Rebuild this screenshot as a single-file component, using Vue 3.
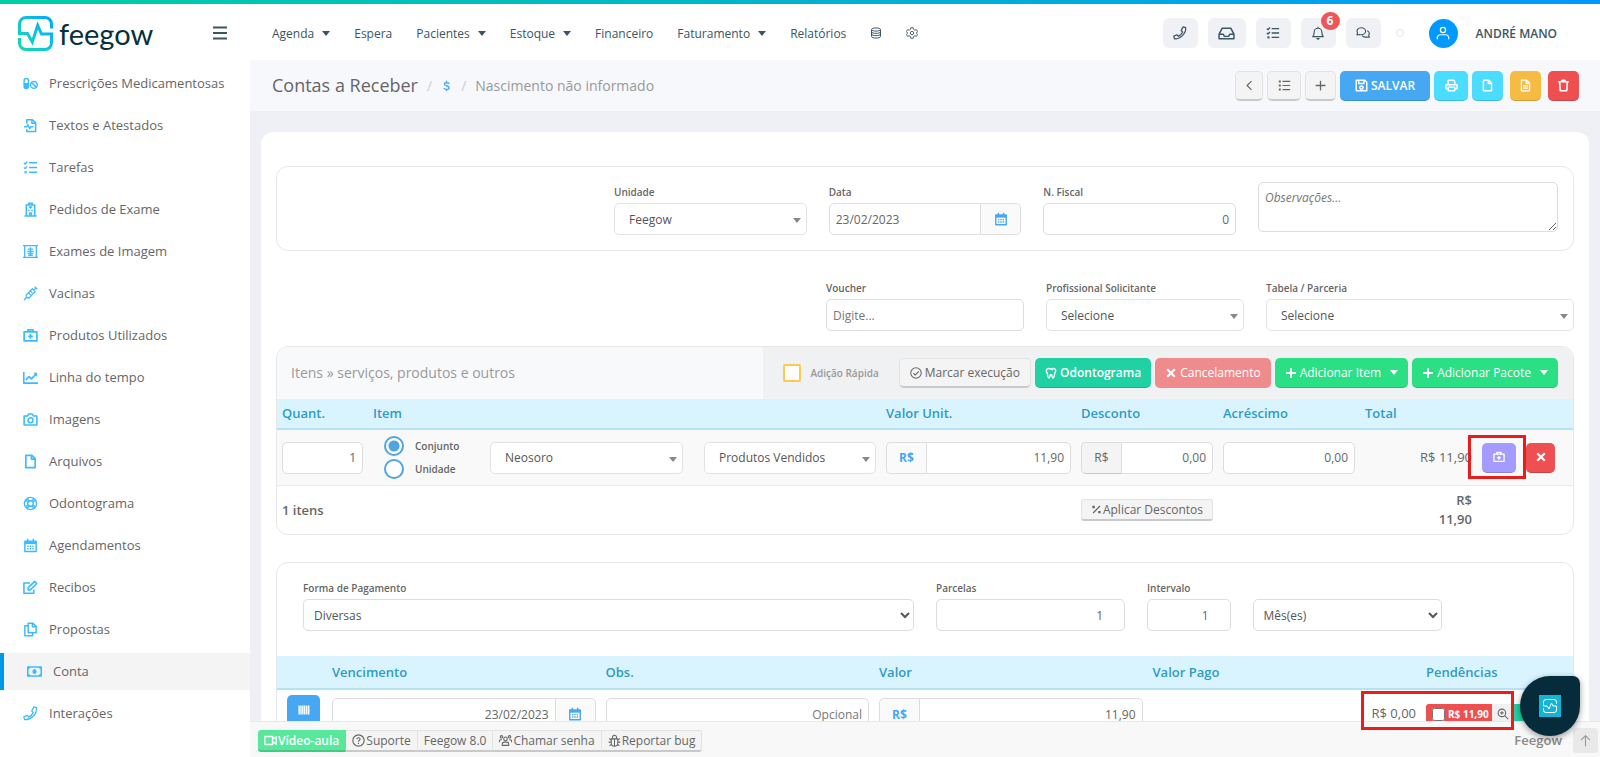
<template>
  <div class="app">
    <header class="topnav">
      <div class="brand">
        <a href="#" class="logo" aria-label="feegow">
          <svg class="logo-mark" viewBox="0 0 35 35" fill="none" stroke="url(#brandGradient)" stroke-width="3">
            <defs>
              <linearGradient id="brandGradient" x1="0" y1="1" x2="1" y2="0">
                <stop offset="0" stop-color="#0fdca8" />
                <stop offset="0.45" stop-color="#0fc6dc" />
                <stop offset="1" stop-color="#00a8ff" />
              </linearGradient>
            </defs>
            <path d="M33.5 12.5V8A6.5 6.5 0 0 0 27 1.5H8A6.5 6.5 0 0 0 1.5 8v9.5h8l4.8 8.5 5.4-16.5 3.8 8.5h10v9a6.5 6.5 0 0 1-6.5 6.5H8A6.5 6.5 0 0 1 1.5 27v-5" />
          </svg>
          <span>feegow</span>
        </a>
        <button type="button" class="menu-toggle" aria-label="Menu"><Icon name="bars" /></button>
      </div>
      <nav class="nav">
        <a v-for="item in navItems" :key="item.label" href="#">{{ item.label }}<i v-if="item.menu" class="caret"></i></a>
        <a href="#" aria-label="Dados"><Icon name="database" /></a>
        <a href="#" aria-label="Ajustes"><Icon name="gear" /></a>
      </nav>
      <div class="tools">
        <button v-for="tool in tools" :key="tool.icon" type="button" class="tool" :class="tool.icon" :aria-label="tool.label">
          <Icon :name="tool.icon" />
          <span v-if="tool.badge" class="badge">{{ tool.badge }}</span>
        </button>
        <span class="status-dot"></span>
        <span class="avatar"><Icon name="user" /></span>
        <span class="user-name">ANDRÉ MANO</span>
      </div>
    </header>

    <div class="body">
      <aside class="sidebar">
        <a v-for="link in links" :key="link.label" href="#" class="side-link" :class="{ active: link.active }">
          <Icon :name="link.icon" />{{ link.label }}
        </a>
      </aside>

      <div class="workspace">
        <div class="topbar">
          <h1>Contas a Receber</h1>
          <span class="sep">/</span>
          <Icon name="dollar" class="crumb-icon" />
          <span class="sep">/</span>
          <span class="crumb">Nascimento não informado</span>
          <div class="actions">
            <button type="button" class="btn w28" aria-label="Voltar"><Icon name="left" /></button>
            <button type="button" class="btn w34" aria-label="Lista"><Icon name="list" /></button>
            <button type="button" class="btn w31" aria-label="Novo"><Icon name="plus" /></button>
            <button type="button" class="btn primary save"><Icon name="save" />SALVAR</button>
            <button type="button" class="btn info w34" aria-label="Imprimir"><Icon name="print" /></button>
            <button type="button" class="btn info w31" aria-label="Arquivo"><Icon name="file" /></button>
            <button type="button" class="btn warning w31 apart" aria-label="Recibo"><Icon name="filetext" /></button>
            <button type="button" class="btn danger w31 apart" aria-label="Excluir"><Icon name="trash" /></button>
          </div>
        </div>

        <main class="content">
          <form class="card" @submit.prevent>
            <section class="panel head-panel fields">
              <div class="field c2 from4">
                <label for="unidade">Unidade</label>
                <div class="select"><select id="unidade"><option>Feegow</option></select></div>
              </div>
              <div class="field c2">
                <label for="data">Data</label>
                <div class="group">
                  <input id="data" type="text" v-model="date">
                  <button type="button" class="addon" aria-label="Calendário"><Icon name="calendar" /></button>
                </div>
              </div>
              <div class="field c2">
                <label for="fiscal">N. Fiscal</label>
                <input id="fiscal" class="num" type="text" value="0">
              </div>
              <textarea class="c3" placeholder="Observações..." aria-label="Observações"></textarea>
            </section>

            <div class="fields extra-fields">
              <div class="field c2 from6">
                <label for="voucher">Voucher</label>
                <input id="voucher" type="text" placeholder="Digite...">
              </div>
              <div class="field c2">
                <label for="profissional">Profissional Solicitante</label>
                <div class="select"><select id="profissional"><option>Selecione</option></select></div>
              </div>
              <div class="field c3">
                <label for="tabela">Tabela / Parceria</label>
                <div class="select"><select id="tabela"><option>Selecione</option></select></div>
              </div>
            </div>

            <section class="panel items">
              <div class="items-head">
                <h2>Itens » serviços, produtos e outros</h2>
                <div class="items-actions">
                  <label class="quick"><input type="checkbox">Adição Rápida</label>
                  <button type="button" class="btn"><Icon name="check" />Marcar execução</button>
                  <button type="button" class="btn teal"><Icon name="tooth" />Odontograma</button>
                  <button type="button" class="btn danger" disabled><Icon name="times" />Cancelamento</button>
                  <button type="button" class="btn success"><Icon name="plusbold" />Adicionar Item<i class="caret"></i></button>
                  <button type="button" class="btn success"><Icon name="plusbold" />Adicionar Pacote<i class="caret"></i></button>
                </div>
              </div>
              <table class="items-table">
                <colgroup>
                  <col class="col-qty"><col><col class="col-kind"><col class="col-unit"><col class="col-off">
                  <col class="col-off"><col class="col-total"><col class="col-use"><col class="col-del">
                </colgroup>
                <thead>
                  <tr>
                    <th>Quant.</th><th colspan="2">Item</th><th>Valor Unit.</th><th>Desconto</th><th>Acréscimo</th>
                    <th>Total</th><th></th><th></th>
                  </tr>
                </thead>
                <tbody>
                  <tr>
                    <td><input class="num" type="text" value="1" aria-label="Quantidade"></td>
                    <td>
                      <div class="item-cell">
                        <div class="radios">
                          <label><input v-model="kind" type="radio" value="C">Conjunto</label>
                          <label><input v-model="kind" type="radio" value="U">Unidade</label>
                        </div>
                        <div class="select"><select aria-label="Item"><option>Neosoro</option></select></div>
                      </div>
                    </td>
                    <td><div class="select"><select aria-label="Categoria"><option>Produtos Vendidos</option></select></div></td>
                    <td>
                      <div class="group">
                        <span class="addon money">R$</span>
                        <input class="num" type="text" value="11,90" aria-label="Valor unitário">
                      </div>
                    </td>
                    <td>
                      <div class="group">
                        <button type="button" class="addon plain">R$</button>
                        <input class="num" type="text" value="0,00" aria-label="Desconto">
                      </div>
                    </td>
                    <td><input class="num" type="text" value="0,00" aria-label="Acréscimo"></td>
                    <td class="right">R$ 11,90</td>
                    <td>
                      <div class="marked">
                        <button type="button" class="btn purple w34" aria-label="Estoque"><Icon name="kit" /></button>
                        <span class="mark mark-stock"></span>
                      </div>
                    </td>
                    <td><button type="button" class="btn danger w29" aria-label="Remover"><Icon name="times" /></button></td>
                  </tr>
                </tbody>
                <tfoot>
                  <tr>
                    <td colspan="4">1 itens</td>
                    <td colspan="2"><button type="button" class="btn small discount"><Icon name="percent" />Aplicar Descontos</button></td>
                    <td class="right total">R$<br>11,90</td>
                    <td colspan="2"></td>
                  </tr>
                </tfoot>
              </table>
            </section>

            <section class="panel payment">
              <div class="fields pay-fields">
                <div class="field c6">
                  <label for="forma">Forma de Pagamento</label>
                  <select id="forma"><option>Diversas</option></select>
                </div>
                <div class="field c2">
                  <label for="parcelas">Parcelas</label>
                  <input id="parcelas" class="num spin" type="text" value="1">
                </div>
                <div class="field c1">
                  <label for="intervalo">Intervalo</label>
                  <input id="intervalo" class="num spin" type="text" value="1">
                </div>
                <div class="field c2 bottom">
                  <select aria-label="Período"><option>Mês(es)</option></select>
                </div>
              </div>
              <table class="pay-table">
                <colgroup><col class="col-code"><col><col><col><col><col class="col-due"></colgroup>
                <thead>
                  <tr><th></th><th>Vencimento</th><th>Obs.</th><th>Valor</th><th>Valor Pago</th><th>Pendências</th></tr>
                </thead>
                <tbody>
                  <tr>
                    <td class="code"><button type="button" class="btn primary" aria-label="Boleto"><Icon name="barcode" /></button></td>
                    <td>
                      <div class="group">
                        <input class="num" type="text" v-model="date" aria-label="Vencimento">
                        <button type="button" class="addon" aria-label="Calendário"><Icon name="calendar" /></button>
                      </div>
                    </td>
                    <td><input class="num" type="text" placeholder="Opcional" aria-label="Observação"></td>
                    <td>
                      <div class="group">
                        <span class="addon money">R$</span>
                        <input class="num" type="text" value="11,90" aria-label="Valor">
                      </div>
                    </td>
                    <td class="right paid">R$ 0,00</td>
                    <td>
                      <div class="marked due">
                        <label class="pending"><input type="checkbox">R$ 11,90</label>
                        <button type="button" class="look" aria-label="Detalhes"><Icon name="zoom" /></button>
                        <button type="button" class="pay" aria-label="Pagar"></button>
                        <span class="mark mark-due"></span>
                      </div>
                    </td>
                  </tr>
                </tbody>
              </table>
            </section>
          </form>
        </main>

        <footer class="footer">
          <div class="help">
            <button type="button" class="btn small video"><Icon name="video" />Vídeo-aula</button>
            <button type="button" class="btn small"><Icon name="question" />Suporte</button>
            <button type="button" class="btn small">Feegow 8.0</button>
            <button type="button" class="btn small"><Icon name="users" />Chamar senha</button>
            <button type="button" class="btn small"><Icon name="bug" />Reportar bug</button>
          </div>
          <span class="footer-brand">Feegow</span>
          <button type="button" class="to-top" aria-label="Topo"><Icon name="up" /></button>
        </footer>
      </div>
    </div>

    <button type="button" class="chat" aria-label="Chat">
      <svg viewBox="0 0 22 22" fill="none" stroke="#fff" stroke-width="1">
        <path d="M17.500 9V7A2.500 2.500 0 0 0 15 4.500H7A2.500 2.500 0 0 0 4.500 7v4H8l2 3 2.500-6 1.500 3h3.500v4a2.500 2.500 0 0 1-2.500 2.500H7A2.500 2.500 0 0 1 4.500 15v-2" />
      </svg>
    </button>
  </div>
</template>

<script setup>
import { ref, h } from 'vue'

const date = ref('23/02/2023')
const kind = ref('C')

// s = stroked outline, f = filled shape, w = stroke width (16x16 grid)
const icons = {
  bars: { s: 'M1 2.500h14M1 8h14M1 13.500h14', w: 2 },
  database: { s: 'M2 3.500c0-3 12-3 12 0v9c0 3-12 3-12 0zM2 3.500c0 2.600 12 2.600 12 0M2 6.500c0 2.600 12 2.600 12 0M2 9.500c0 2.600 12 2.600 12 0', w: 1.3 },
  gear: { s: 'M6.500 1h3l.5 2.200 1.700 1 2.200-.7 1.500 2.600L13.800 8l1.600 1.900-1.500 2.600-2.200-.7-1.700 1-.5 2.200h-3L6 12.800l-1.700-1-2.200.7L.6 9.900 2.200 8 .6 6.100l1.500-2.600 2.200.7 1.700-1zM10.200 8a2.200 2.200 0 1 1-4.400 0 2.200 2.200 0 0 1 4.400 0z', w: 1.2 },
  phone: { s: 'M11.500 1l3 .8c.5 7-6 13.200-12.800 12.800l-.8-3 3.600-1.600 1.500 1.800c2.200-1 4-2.800 5-5L9.300 5.300z', w: 1.4 },
  inbox: { s: 'M1 8.500L4 3h8l3 5.500V13H1zM1 8.700h4l1 2h4l1-2h4', w: 1.4 },
  tasks: { s: 'M1 3l1.200 1.200L4.500 1.800M1 8l1.200 1.200 2.300-2.400M6.500 3H15M6.500 8H15M6.500 13H15', f: 'M1.600 11.800H4v2.400H1.600z', w: 1.5 },
  bell: { s: 'M2 12.200c1.600-1.600 1.600-3 1.600-5.200a4.400 4.400 0 0 1 8.800 0c0 2.200 0 3.600 1.600 5.200zM8 2.500V.8', f: 'M6 13.800h4a2 2 0 0 1-4 0z', w: 1.3 },
  chats: { s: 'M1 10c1-1 .8-1.500.6-2.500C.3 4.500 2.600 2 5.800 2s5.200 2 5.200 4-2 4-5.200 4c-.8 0-1.500 0-2-.3-1 .5-1.800.5-2.800.3zM12.600 5.500c3 .8 3 3.500 1.900 5 0 1 .2 1.500.8 2.300-1 .2-2 .1-2.800-.3-2.500.6-4.500-.2-5.300-1.500', w: 1.3 },
  user: { s: 'M11 4.500a3 3 0 1 1-6 0 3 3 0 0 1 6 0zM1.500 15v-1.500a3.500 3.500 0 0 1 3.500-3.500h6a3.500 3.500 0 0 1 3.500 3.500V15', w: 1.4 },
  pills: { s: 'M1.200 5a2.300 2.300 0 0 1 4.600 0v6a2.300 2.300 0 0 1-4.600 0zM15.200 9.500a3.600 3.600 0 1 1-7.200 0 3.600 3.600 0 0 1 7.200 0zM9.300 7.200l4.800 4.700', f: 'M1 7.500h5V11a2.500 2.500 0 0 1-5 0z', w: 1.6 },
  filewave: { s: 'M4 6V1.800h6L13.500 5v9.500H4V12M9.500 2v3.500h4M1 9.200h3l1.200-2 2 4 1.300-2H11', w: 1.6 },
  hospital: { s: 'M3.500 15V3.200h9V15M1.500 15h13M6 3V1.200h4V3M8 4.200v3M6.500 5.700h3M7 15v-3.200h2V15M5.500 9h1.700M8.800 9h1.700', w: 1.6 },
  xray: { s: 'M0 1.700h16M0 14.300h16M1.800 2v12M14.200 2v12M8 3.500v9M5 5.500h6M4.500 7.800h7M5 10h6M5.500 12h5', w: 1.4 },
  syringe: { s: 'M1 15l3-3M3.500 12.500V9.500L10 3l3 3-6.500 6.500zM9.500 2.500l4 4M11.500 4.500L14 2M12.500.8l2.700 2.700M6 7.500L8 9.500M8 5.500l2 2', w: 1.4 },
  kit: { s: 'M1.200 4.200h13.600v9.600H1.200zM5.200 4V1.900h5.600V4M8 6.500v5M5.500 9h5', w: 1.8 },
  chart: { s: 'M.8 2v12H16M3 10.500l3.500-3.500 2.500 2.500 5-5', f: 'M10.800 3H15v4.200z', w: 1.8 },
  camera: { s: 'M1.200 4.200H5l1-2h4l1 2h3.800v9.600H1.200zM10.600 8.800a2.600 2.600 0 1 1-5.200 0 2.600 2.600 0 0 1 5.200 0z', w: 1.7 },
  file: { s: 'M3 1.500h6.500L13 5v9.500H3zM9 1.800V5.500h4', w: 1.8 },
  filetext: { s: 'M3 1.500h6.500L13 5v9.500H3zM9 1.800V5.500h4M5 8.500h6M5 11.200h6', w: 1.6 },
  ring: { s: 'M14.500 8a6.500 6.500 0 1 1-13 0 6.500 6.500 0 0 1 13 0zM11 8a3 3 0 1 1-6 0 3 3 0 0 1 6 0zM3.200 4.600l2.200 2.200M4.600 3.200l2.200 2.200M12.800 4.600l-2.200 2.200M11.400 3.200L9.200 5.400M3.200 11.400l2.200-2.200M4.600 12.800l2.200-2.200M12.800 11.400l-2.200-2.200M11.400 12.800l-2.200-2.200', w: 1.5 },
  calendar: { s: 'M2 3.500h12v11H2zM5 .8v3M11 .8v3M4.500 8.700h1.600M7.200 8.700h1.600M9.900 8.700h1.600M4.500 11.500h1.600M7.200 11.500h1.600M9.900 11.500h1.600', f: 'M2 3.500h12V6.500H2z', w: 1.6 },
  edit: { s: 'M11.500 10v4.200H1V3.200h6.500M5.500 10.500V8.200l7-6.700 2.200 2.200-7 6.800z', w: 1.7 },
  copy: { s: 'M5.500 1.200h5L14 4.500v7H5.500zM10 1.500V5h4M5.200 4H2v10.700h8.200v-3', w: 1.6 },
  money: { s: 'M.8 3.200h14.400v9.600H.8zM.8 5.500l2.200-2M13 3.500l2.200 2M.8 10.500l2.200 2M13 12.500l2.200-2', f: 'M10.200 8a2.200 2.700 0 1 1-4.400 0 2.200 2.700 0 0 1 4.400 0z', w: 1.7 },
  dollar: { s: 'M12 4.800C11 3 5 2.500 4.800 5.300 4.700 8.300 11.800 7 11.800 10.600c0 3-6.500 3-7.800.3M8 .2v2.600M8 13v2.800', w: 2 },
  left: { s: 'M10.500 2.500L5 8l5.500 5.500', w: 1.4 },
  list: { s: 'M5.500 3H15M5.500 8H15M5.500 13H15', f: 'M1 1.800h2.400v2.400H1zM1 6.800h2.400v2.400H1zM1 11.800h2.400v2.400H1z', w: 1.5 },
  plus: { s: 'M8 2v12M2 8h12', w: 1.6 },
  plusbold: { s: 'M8 1.500v13M1.500 8h13', w: 2.6 },
  save: { s: 'M1.500 1.500h10.500l2.500 2.500v10.500h-13zM4.500 1.500v4h6.500v-4M10 10.500a2 2 0 1 1-4 0 2 2 0 0 1 4 0z', w: 1.8 },
  print: { s: 'M4 6.500v-5h6.500L12 3v3.500M4 12H1.200V7h13.600v5H12M4 10.200h8v4.300H4z', w: 1.8 },
  trash: { s: 'M1.500 3.500h13M5.500 3.200l.8-1.700h3.400l.8 1.700M3.200 3.500l.8 11h8l.8-11', w: 1.9 },
  check: { s: 'M15 8A7 7 0 1 1 1 8a7 7 0 0 1 14 0zM4.500 8.200L7 10.700l4.700-4.900', w: 1.4 },
  tooth: { s: 'M8 3c2-1.500 5.500-1.800 6.200 1.300.5 2.700-1.400 3.300-1.600 5.700-.2 2-.6 4.600-1.900 4.600C9.300 14.600 9.600 10 8 10s-1.300 4.600-2.700 4.600c-1.300 0-1.700-2.600-1.900-4.600C3.200 7.600 1.300 7 1.800 4.300 2.500 1.200 6 1.500 8 3l2.200 1.300', w: 1.9 },
  times: { s: 'M3 3l10 10M13 3L3 13', w: 3 },
  percent: { s: 'M3 13L13 3', f: 'M2 2.500h3.500V6H2zM10.500 10H14v3.500h-3.500z', w: 1.8 },
  barcode: { s: 'M1.500 2v12M4 2v12M6.500 2v12M9 2v12M11.700 2v12M14.300 2v12', w: 1.9 },
  zoom: { s: 'M11.500 6.500a5 5 0 1 1-10 0 5 5 0 0 1 10 0zM10.200 10.200L15 15M6.500 4.200v4.600M4.200 6.500h4.600', w: 1.4 },
  video: { s: 'M1 3h9.500v10H1zM10.500 6.500L15 3.500v9l-4.500-3', w: 1.7 },
  question: { s: 'M15 8A7 7 0 1 1 1 8a7 7 0 0 1 14 0zM6 6.300c.2-2.400 4-2.200 4 0C10 7.800 8 7.700 8 9.500M8 10.800v1.400', w: 1.4 },
  users: { s: 'M10.200 6a2.200 2.200 0 1 1-4.400 0 2.200 2.200 0 0 1 4.400 0zM4 14v-1.500A2.500 2.500 0 0 1 6.500 10h3a2.500 2.500 0 0 1 2.500 2.500V14zM4.500 3.500a1.500 1.500 0 1 1-3 0 1.500 1.500 0 0 1 3 0zM14.500 3.500a1.500 1.500 0 1 1-3 0 1.500 1.500 0 0 1 3 0zM.5 10V8.500A1.500 1.500 0 0 1 2 7h1.500M15.500 10V8.500A1.500 1.500 0 0 0 14 7h-1.500', w: 1.3 },
  bug: { s: 'M4 6h8v5a4 4 0 0 1-8 0zM5.500 6V4a2.500 2.500 0 0 1 5 0v2M8 6v9M4 7.500L1.500 5.500M12 7.500l2.500-2M4 10H.8M12 10h3.200M4.500 12.500L2 14.500M11.500 12.500l2.500 2', w: 1.3 },
  up: { s: 'M8 15V2M2.500 7.500L8 2l5.500 5.500', w: 1.4 },
}

function Icon({ name }) {
  const { s, f, w } = icons[name]
  return h('svg', { class: 'icon', viewBox: '0 0 16 16', 'aria-hidden': 'true' }, [
    h('path', { d: s, fill: 'none', stroke: 'currentColor', 'stroke-width': w, 'stroke-linejoin': 'round' }),
    f ? h('path', { d: f, fill: 'currentColor' }) : null,
  ])
}
Icon.props = ['name']

const navItems = [
  { label: 'Agenda', menu: true },
  { label: 'Espera' },
  { label: 'Pacientes', menu: true },
  { label: 'Estoque', menu: true },
  { label: 'Financeiro' },
  { label: 'Faturamento', menu: true },
  { label: 'Relatórios' },
]

const tools = [
  { icon: 'phone', label: 'Ligações' },
  { icon: 'inbox', label: 'Entrada' },
  { icon: 'tasks', label: 'Tarefas' },
  { icon: 'bell', label: 'Notificações', badge: 6 },
  { icon: 'chats', label: 'Mensagens' },
]

const links = [
  { icon: 'pills', label: 'Prescrições Medicamentosas' },
  { icon: 'filewave', label: 'Textos e Atestados' },
  { icon: 'tasks', label: 'Tarefas' },
  { icon: 'hospital', label: 'Pedidos de Exame' },
  { icon: 'xray', label: 'Exames de Imagem' },
  { icon: 'syringe', label: 'Vacinas' },
  { icon: 'kit', label: 'Produtos Utilizados' },
  { icon: 'chart', label: 'Linha do tempo' },
  { icon: 'camera', label: 'Imagens' },
  { icon: 'file', label: 'Arquivos' },
  { icon: 'ring', label: 'Odontograma' },
  { icon: 'calendar', label: 'Agendamentos' },
  { icon: 'edit', label: 'Recibos' },
  { icon: 'copy', label: 'Propostas' },
  { icon: 'money', label: 'Conta', active: true },
  { icon: 'phone', label: 'Interações' },
]
</script>

<style>
body {
  margin: 0;
  overflow: hidden;
}
</style>

<style scoped>
.app {
  position: relative;
  display: flex;
  flex-direction: column;
  height: 100vh;
  overflow: hidden;
  background: #eff0f5;
  color: #666;
  font: 13px/19px "Open Sans", "Noto Sans", sans-serif;
}
.app *, .app *::before, .app *::after { box-sizing: border-box; }
a { color: inherit; text-decoration: none; }
button, input, select, textarea { font: inherit; color: inherit; margin: 0; }
button { cursor: pointer; padding: 0; border: 0; background: none; }
.icon { width: 14px; height: 14px; flex: none; display: block; }
.caret {
  display: inline-block;
  border: 4px solid transparent;
  border-top: 5px solid currentColor;
  border-bottom: 0;
}

/* header */
.topnav {
  flex: none;
  display: flex;
  align-items: center;
  height: 60px;
  padding-top: 6px;
  background: linear-gradient(90deg, #00cfa5, #00b4cc 50%, #0099ff) top / 100% 4px no-repeat #fff;
  color: #3a5563;
}
.brand {
  width: 250px;
  padding: 0 22px 0 18px;
  display: flex;
  align-items: center;
  justify-content: space-between;
}
.logo {
  display: flex;
  align-items: center;
  gap: 6px;
  font: 29px/35px Lato, sans-serif;
  color: #06303c;
}
.logo-mark { width: 35px; height: 35px; }
.menu-toggle .icon { width: 16px; height: 16px; }
.nav { display: flex; align-items: center; gap: 24px; padding-left: 22px; font-size: 12px; }
.nav a { display: flex; align-items: center; gap: 8px; }
.nav .icon { width: 12px; height: 12px; }
.tools { margin-left: auto; padding-right: 43px; display: flex; align-items: center; gap: 10px; }
.tool {
  position: relative;
  width: 35px;
  height: 30px;
  border-radius: 6px;
  background: #eff1f5;
  display: grid;
  place-items: center;
}
.tool.inbox { width: 38px; }
.tool.inbox .icon { width: 17px; height: 17px; }
.badge {
  position: absolute;
  top: -6px;
  right: -4px;
  width: 19px;
  height: 18px;
  border-radius: 9px;
  background: #ee5657;
  color: #fff;
  font-size: 12px;
  font-weight: 700;
  line-height: 18px;
}
.status-dot { width: 8px; height: 8px; margin: 0 15px 0 5px; border: 1px solid #e5e5e5; border-radius: 50%; }
.avatar {
  width: 29px;
  height: 29px;
  border-radius: 50%;
  background: #0099ff;
  color: #fff;
  display: grid;
  place-items: center;
}
.user-name { margin-left: 8px; font-size: 12px; font-weight: 600; }

/* sidebar */
.body { flex: 1; min-height: 0; display: flex; }
.sidebar {
  width: 250px;
  flex: none;
  padding-top: 5px;
  display: flex;
  flex-direction: column;
  gap: 5px;
  background: #fff;
}
.side-link {
  flex: none;
  height: 37px;
  padding-left: 23px;
  display: flex;
  align-items: center;
  gap: 11px;
  font-size: 13px;
  white-space: nowrap;
}
.side-link .icon { width: 15px; height: 15px; color: #3cbcff; }
.side-link.active { border-left: 4px solid #0099e6; background: #f4f4f4; }

/* page title */
.workspace { flex: 1; min-width: 0; display: flex; flex-direction: column; }
.topbar {
  flex: none;
  height: 51px;
  padding: 0 21px 0 22px;
  display: flex;
  align-items: center;
  background: #f7f8fc;
}
h1 { margin: 0; font-size: 18px; font-weight: 400; }
.sep { margin: 0 9px; font-size: 14px; color: #ccc; }
.crumb-icon { width: 11px; color: #4ba9f5; }
.crumb { font-size: 14px; color: #999; }
.actions { margin-left: auto; display: flex; gap: 4px; }
.btn {
  height: 30px;
  padding: 0 10px;
  border: 1px solid #e3e3e3;
  border-bottom: 2px solid #c9c9c9;
  border-radius: 5px;
  background: #f4f4f4;
  color: #666;
  display: inline-flex;
  align-items: center;
  justify-content: center;
  gap: 3px;
  white-space: nowrap;
}
.btn .icon { width: 12px; height: 12px; }
.primary, .info, .warning, .danger, .teal, .success, .purple {
  border: 0;
  border-bottom: 1px solid rgba(0, 0, 0, 0.15);
  color: #fff;
}
.primary { background: #46a8f2; }
.info { background: #4addff; }
.warning { background: #f6bb42; }
.danger { background: #ee5052; }
.danger:disabled { background: #ef8b8d; border-color: #ef8b8d; }
.teal { background: #1fd1a3; }
.success { background: #2adf84; }
.purple { background: #a39bff; }
.success .caret { margin-left: 6px; }
.w28 { width: 28px; padding: 0; }
.w29 { width: 29px; padding: 0; }
.w31 { width: 31px; padding: 0; }
.w34 { width: 34px; padding: 0; }
.actions .icon { width: 13px; height: 13px; }
.save { width: 90px; padding: 0; font-size: 12px; font-weight: 600; }
.apart { margin-left: 3px; }

/* form */
.content { flex: 1; min-height: 0; padding: 21px 11px 0; }
.card { padding: 34px 15px; border-radius: 12px; background: #fff; }
.panel { border: 1px solid #e7e7e7; border-radius: 12px; }
.fields { display: grid; grid-template-columns: repeat(12, 1fr); column-gap: 22px; }
.field { min-width: 0; }
.field > label { display: block; font-size: 10px; font-weight: 600; line-height: 21px; height: 21px; }
.c1 { grid-column: span 1; }
.c2 { grid-column: span 2; }
.c3 { grid-column: span 3; }
.c6 { grid-column: span 6; }
.from4 { grid-column: 4 / span 2; }
.from6 { grid-column: 6 / span 2; }
.bottom { align-self: end; }
.head-panel { padding: 15px; }
.extra-fields { margin: 27px 0 15px; }
input[type="text"], select, textarea {
  display: block;
  width: 100%;
  height: 32px;
  padding: 0 6px;
  border: 1px solid #ddd;
  border-radius: 5px;
  background: #fff;
  font-size: 12px;
  outline: 0;
}
select { padding: 0 6px; color: #555; }
textarea { height: 50px; padding-top: 5px; resize: vertical; }
textarea::placeholder { font-style: italic; }
::placeholder { color: #777; opacity: 1; }
.num { text-align: right; }
input.spin { padding-right: 21px; }
.select { position: relative; }
.select select { appearance: none; padding: 0 14px; border-color: #e3e3e3; }
.select::after {
  content: "";
  position: absolute;
  right: 6px;
  top: 15px;
  border: 4px solid transparent;
  border-top: 5px solid #888;
  border-bottom: 0;
  pointer-events: none;
}
.group { display: flex; }
.group input { flex: 1; min-width: 0; }
.addon {
  width: 40px;
  flex: none;
  border: 1px solid #ddd;
  background: #fafafa;
  display: grid;
  place-items: center;
  color: #46a8f2;
}
.addon:first-child { border-right: 0; border-radius: 5px 0 0 5px; }
.addon:last-child { border-left: 0; border-radius: 0 5px 5px 0; }
.group .addon:first-child + input { border-radius: 0 5px 5px 0; }
.group input:first-child { border-radius: 5px 0 0 5px; }
.money { font-size: 12px; font-weight: 700; }
.plain { background: #f4f4f4; color: #666; font-size: 12px; border-bottom-color: #c9c9c9; }

/* items */
.items-head {
  display: flex;
  justify-content: space-between;
  border-radius: 11px 11px 0 0;
  background: #f8f9fb;
  overflow: hidden;
}
h2 { margin: 0; padding-left: 14px; font-size: 14px; font-weight: 400; line-height: 52px; color: #999; }
.items-actions {
  padding: 11px 15px 11px 20px;
  display: flex;
  align-items: center;
  gap: 4px;
  background: #f0f1f3;
  font-size: 12px;
}
.items-actions .btn { font-size: 12px; }
.items-actions .teal { font-weight: 600; }
.quick {
  margin-right: 16px;
  display: flex;
  align-items: center;
  gap: 9px;
  font-size: 10px;
  font-weight: 600;
  color: #999;
}
.quick input {
  appearance: none;
  width: 18px;
  height: 18px;
  margin: 0;
  border: 2px solid #ffc84f;
  border-radius: 2px;
  background: #fff;
}
table { width: 100%; table-layout: fixed; border-collapse: separate; border-spacing: 0; }
th, td { padding: 0 5px; text-align: left; }
th {
  height: 31px;
  background: #daf4ff;
  border-bottom: 2px solid #b3e3f5;
  color: #2f9bc4;
  font-size: 13px;
  font-weight: 600;
}
.col-qty { width: 91px; }
.col-kind { width: 182px; }
.col-unit { width: 195px; }
.col-off { width: 142px; }
.col-total { width: 117px; }
.col-use { width: 44px; }
.col-del { width: 52px; }
.items-table tbody td { height: 56px; background: #f9f9f9; border-bottom: 1px solid #eaeaea; }
.right { text-align: right; }
.item-cell { display: flex; align-items: center; padding-right: 11px; }
.item-cell .select { flex: 1; }
.radios { width: 117px; padding-left: 11px; display: flex; flex-direction: column; gap: 3px; }
.radios label { display: flex; align-items: center; gap: 11px; height: 20px; font-size: 10px; font-weight: 600; }
.radios input {
  appearance: none;
  width: 20px;
  height: 20px;
  border: 2px solid #4ea5e0;
  border-radius: 50%;
  background: #fff;
}
.radios input:checked { background: radial-gradient(circle, #4ea5e0 5px, #fff 6px); }
tfoot td { height: 48px; font-weight: 600; }
.small { height: 22px; padding: 0 9px; border-radius: 3px; font-size: 12px; font-weight: 400; gap: 1px; }
.small .icon { width: 11px; height: 11px; }
.discount { width: 132px; padding: 0; }
.marked { position: relative; display: flex; align-items: center; }
.mark { position: absolute; z-index: 3; border: 3px solid #ea1d1d; pointer-events: none; }
.mark-stock { left: -14px; right: -10px; top: -8px; bottom: -6px; }

/* payment */
.payment { margin-top: 27px; }
.pay-fields { padding: 15px 26px 25px; }
.pay-table th { height: 34px; }
.col-code { width: 50px; }
.col-due { width: 152px; }
.pay-table td { padding: 8px 5px; vertical-align: top; }
.pay-table .code { padding: 5px 7px 5px 10px; }
.code .btn { width: 33px; padding: 0; }
.code .icon { width: 14px; }
.paid { line-height: 31px; }
.due { height: 32px; }
.pending, .look, .pay { height: 20px; display: flex; align-items: center; }
.pending {
  width: 66px;
  padding-left: 6px;
  gap: 3px;
  border-radius: 3px 0 0 3px;
  background: #ee5052;
  color: #fff;
  font-size: 10px;
  font-weight: 700;
  white-space: nowrap;
}
.pending input { width: 13px; height: 13px; flex: none; margin: 0; }
.look { width: 22px; justify-content: center; background: #f0f0f0; }
.look .icon { width: 12px; height: 12px; }
.pay { width: 22px; border-radius: 0 3px 3px 0; background: #1fd1a3; }
.mark-due { left: -65px; width: 153px; top: -7px; height: 39px; }

/* footer */
.footer {
  position: relative;
  z-index: 2;
  flex: none;
  height: 36px;
  padding: 2px 2px 0 8px;
  display: flex;
  align-items: center;
  border-top: 1px solid #e8e8e8;
  background: #f8f8f8;
}
.help { display: flex; }
.help .btn { padding: 0 6px; border-left: 0; border-radius: 0; }
.help .icon { width: 13px; height: 13px; }
.help .btn:first-child { border-radius: 3px 0 0 3px; }
.help .btn:last-child { border-radius: 0 3px 3px 0; }
.help .video { background: #57e89c; border-color: #57e89c; border-bottom-color: #49c584; color: #fff; font-weight: 600; }
.footer-brand { margin-left: auto; margin-right: 11px; font-weight: 600; color: #888; }
.to-top { width: 25px; height: 25px; border-radius: 3px; background: #e9e9e9; color: #999; display: grid; place-items: center; }
.to-top .icon { width: 13px; height: 13px; }
.chat {
  position: absolute;
  z-index: 4;
  right: 20px;
  bottom: 21px;
  width: 60px;
  height: 60px;
  border-radius: 50% 12% 50% 50%;
  background: #062b3a;
  box-shadow: 0 2px 6px rgba(0, 0, 0, 0.4);
  display: grid;
  place-items: center;
}
.chat svg { width: 22px; height: 22px; background: #14b5d4; }
</style>
